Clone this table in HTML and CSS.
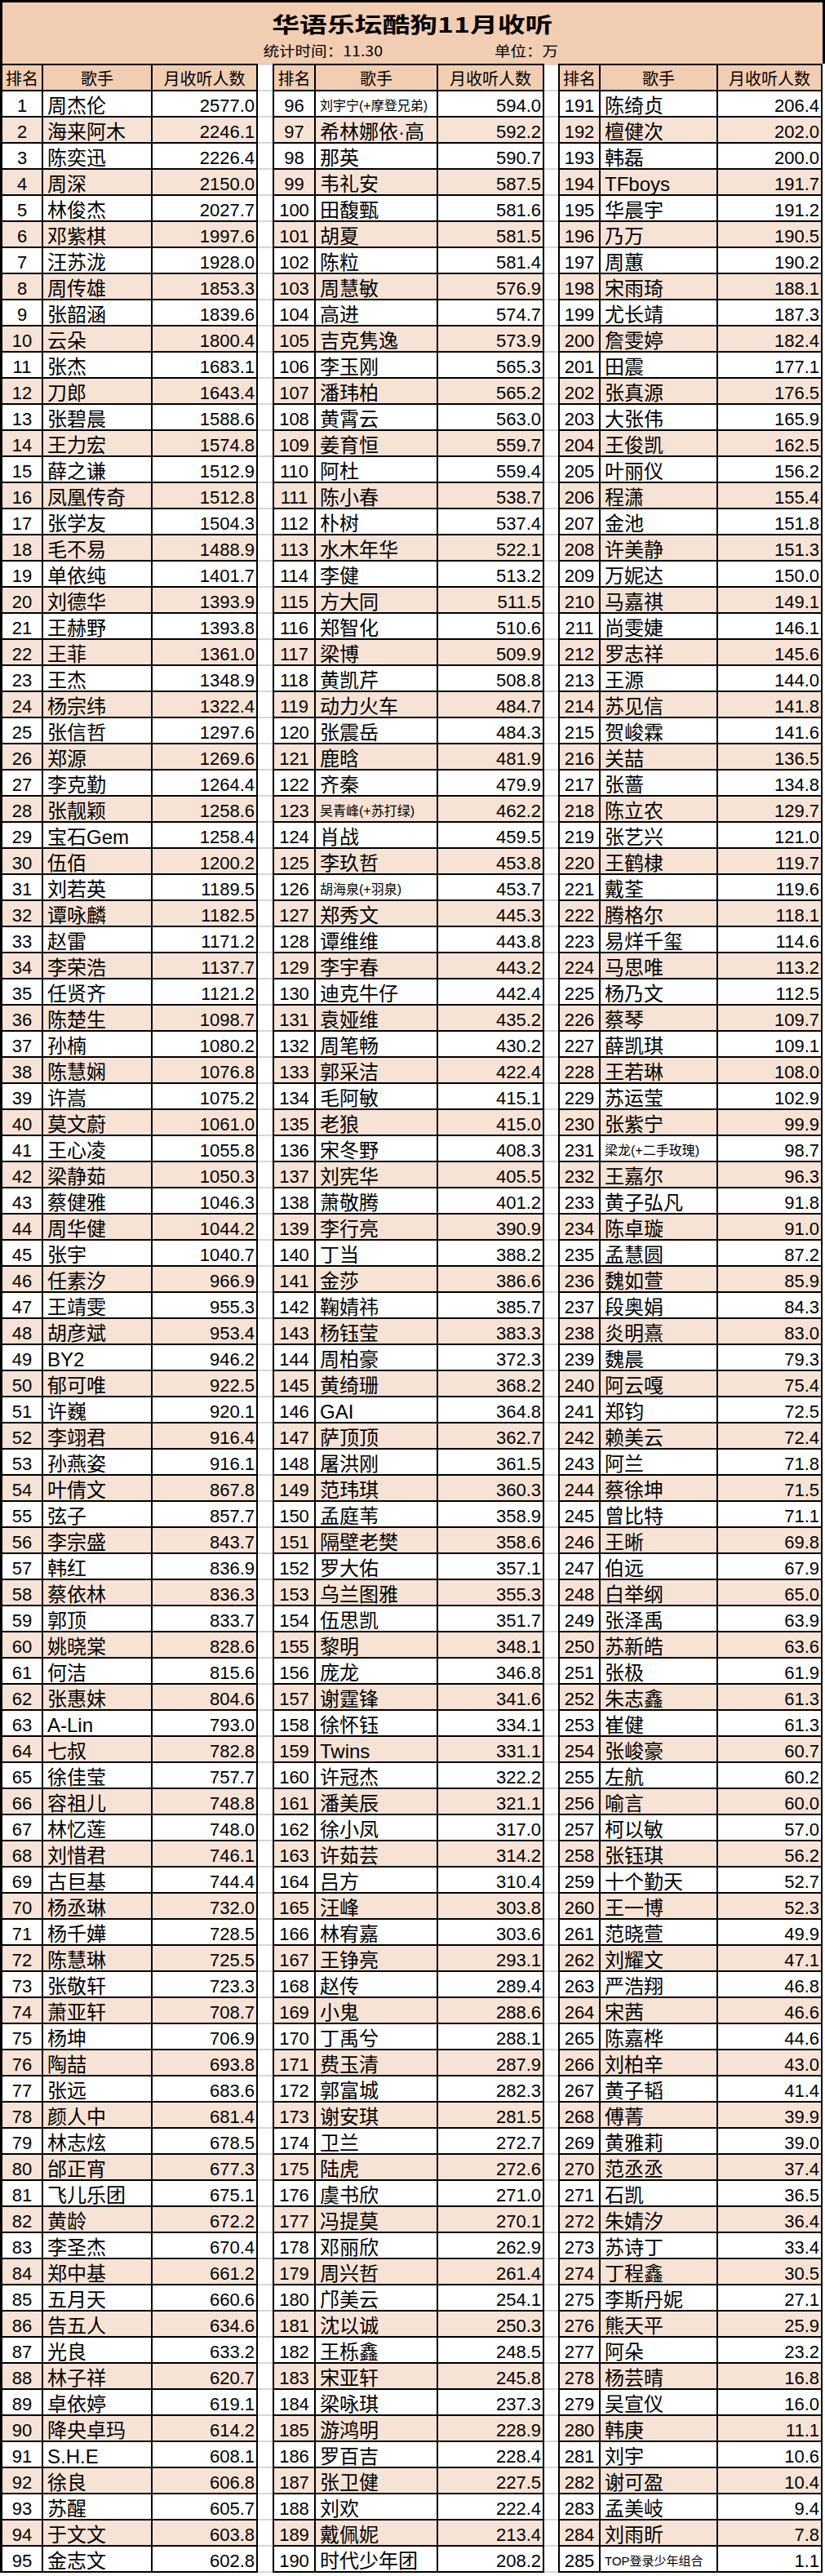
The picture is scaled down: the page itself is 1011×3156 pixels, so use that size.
FILE: index.html
```html
<!DOCTYPE html>
<html lang="zh-CN">
<head>
<meta charset="utf-8">
<title>华语乐坛酷狗11月收听</title>
<link rel="stylesheet" href="styles.css">
</head>
<body>
<header class="title-box">
  <h1 class="title">华语乐坛酷狗11月收听</h1>
  <div class="sub"><span>统计时间：11.30</span><span>单位：万</span></div>
</header>
<main class="board">
<section class="group g1">
<div class="row head"><span>排名</span><span>歌手</span><span>月收听人数</span></div>
<div class="row"><span>1</span><span>周杰伦</span><span>2577.0</span></div>
<div class="row"><span>2</span><span>海来阿木</span><span>2246.1</span></div>
<div class="row"><span>3</span><span>陈奕迅</span><span>2226.4</span></div>
<div class="row"><span>4</span><span>周深</span><span>2150.0</span></div>
<div class="row"><span>5</span><span>林俊杰</span><span>2027.7</span></div>
<div class="row"><span>6</span><span>邓紫棋</span><span>1997.6</span></div>
<div class="row"><span>7</span><span>汪苏泷</span><span>1928.0</span></div>
<div class="row"><span>8</span><span>周传雄</span><span>1853.3</span></div>
<div class="row"><span>9</span><span>张韶涵</span><span>1839.6</span></div>
<div class="row"><span>10</span><span>云朵</span><span>1800.4</span></div>
<div class="row"><span>11</span><span>张杰</span><span>1683.1</span></div>
<div class="row"><span>12</span><span>刀郎</span><span>1643.4</span></div>
<div class="row"><span>13</span><span>张碧晨</span><span>1588.6</span></div>
<div class="row"><span>14</span><span>王力宏</span><span>1574.8</span></div>
<div class="row"><span>15</span><span>薛之谦</span><span>1512.9</span></div>
<div class="row"><span>16</span><span>凤凰传奇</span><span>1512.8</span></div>
<div class="row"><span>17</span><span>张学友</span><span>1504.3</span></div>
<div class="row"><span>18</span><span>毛不易</span><span>1488.9</span></div>
<div class="row"><span>19</span><span>单依纯</span><span>1401.7</span></div>
<div class="row"><span>20</span><span>刘德华</span><span>1393.9</span></div>
<div class="row"><span>21</span><span>王赫野</span><span>1393.8</span></div>
<div class="row"><span>22</span><span>王菲</span><span>1361.0</span></div>
<div class="row"><span>23</span><span>王杰</span><span>1348.9</span></div>
<div class="row"><span>24</span><span>杨宗纬</span><span>1322.4</span></div>
<div class="row"><span>25</span><span>张信哲</span><span>1297.6</span></div>
<div class="row"><span>26</span><span>郑源</span><span>1269.6</span></div>
<div class="row"><span>27</span><span>李克勤</span><span>1264.4</span></div>
<div class="row"><span>28</span><span>张靓颖</span><span>1258.6</span></div>
<div class="row"><span>29</span><span>宝石Gem</span><span>1258.4</span></div>
<div class="row"><span>30</span><span>伍佰</span><span>1200.2</span></div>
<div class="row"><span>31</span><span>刘若英</span><span>1189.5</span></div>
<div class="row"><span>32</span><span>谭咏麟</span><span>1182.5</span></div>
<div class="row"><span>33</span><span>赵雷</span><span>1171.2</span></div>
<div class="row"><span>34</span><span>李荣浩</span><span>1137.7</span></div>
<div class="row"><span>35</span><span>任贤齐</span><span>1121.2</span></div>
<div class="row"><span>36</span><span>陈楚生</span><span>1098.7</span></div>
<div class="row"><span>37</span><span>孙楠</span><span>1080.2</span></div>
<div class="row"><span>38</span><span>陈慧娴</span><span>1076.8</span></div>
<div class="row"><span>39</span><span>许嵩</span><span>1075.2</span></div>
<div class="row"><span>40</span><span>莫文蔚</span><span>1061.0</span></div>
<div class="row"><span>41</span><span>王心凌</span><span>1055.8</span></div>
<div class="row"><span>42</span><span>梁静茹</span><span>1050.3</span></div>
<div class="row"><span>43</span><span>蔡健雅</span><span>1046.3</span></div>
<div class="row"><span>44</span><span>周华健</span><span>1044.2</span></div>
<div class="row"><span>45</span><span>张宇</span><span>1040.7</span></div>
<div class="row"><span>46</span><span>任素汐</span><span>966.9</span></div>
<div class="row"><span>47</span><span>王靖雯</span><span>955.3</span></div>
<div class="row"><span>48</span><span>胡彦斌</span><span>953.4</span></div>
<div class="row"><span>49</span><span>BY2</span><span>946.2</span></div>
<div class="row"><span>50</span><span>郁可唯</span><span>922.5</span></div>
<div class="row"><span>51</span><span>许巍</span><span>920.1</span></div>
<div class="row"><span>52</span><span>李翊君</span><span>916.4</span></div>
<div class="row"><span>53</span><span>孙燕姿</span><span>916.1</span></div>
<div class="row"><span>54</span><span>叶倩文</span><span>867.8</span></div>
<div class="row"><span>55</span><span>弦子</span><span>857.7</span></div>
<div class="row"><span>56</span><span>李宗盛</span><span>843.7</span></div>
<div class="row"><span>57</span><span>韩红</span><span>836.9</span></div>
<div class="row"><span>58</span><span>蔡依林</span><span>836.3</span></div>
<div class="row"><span>59</span><span>郭顶</span><span>833.7</span></div>
<div class="row"><span>60</span><span>姚晓棠</span><span>828.6</span></div>
<div class="row"><span>61</span><span>何洁</span><span>815.6</span></div>
<div class="row"><span>62</span><span>张惠妹</span><span>804.6</span></div>
<div class="row"><span>63</span><span>A-Lin</span><span>793.0</span></div>
<div class="row"><span>64</span><span>七叔</span><span>782.8</span></div>
<div class="row"><span>65</span><span>徐佳莹</span><span>757.7</span></div>
<div class="row"><span>66</span><span>容祖儿</span><span>748.8</span></div>
<div class="row"><span>67</span><span>林忆莲</span><span>748.0</span></div>
<div class="row"><span>68</span><span>刘惜君</span><span>746.1</span></div>
<div class="row"><span>69</span><span>古巨基</span><span>744.4</span></div>
<div class="row"><span>70</span><span>杨丞琳</span><span>732.0</span></div>
<div class="row"><span>71</span><span>杨千嬅</span><span>728.5</span></div>
<div class="row"><span>72</span><span>陈慧琳</span><span>725.5</span></div>
<div class="row"><span>73</span><span>张敬轩</span><span>723.3</span></div>
<div class="row"><span>74</span><span>萧亚轩</span><span>708.7</span></div>
<div class="row"><span>75</span><span>杨坤</span><span>706.9</span></div>
<div class="row"><span>76</span><span>陶喆</span><span>693.8</span></div>
<div class="row"><span>77</span><span>张远</span><span>683.6</span></div>
<div class="row"><span>78</span><span>颜人中</span><span>681.4</span></div>
<div class="row"><span>79</span><span>林志炫</span><span>678.5</span></div>
<div class="row"><span>80</span><span>邰正宵</span><span>677.3</span></div>
<div class="row"><span>81</span><span>飞儿乐团</span><span>675.1</span></div>
<div class="row"><span>82</span><span>黄龄</span><span>672.2</span></div>
<div class="row"><span>83</span><span>李圣杰</span><span>670.4</span></div>
<div class="row"><span>84</span><span>郑中基</span><span>661.2</span></div>
<div class="row"><span>85</span><span>五月天</span><span>660.6</span></div>
<div class="row"><span>86</span><span>告五人</span><span>634.6</span></div>
<div class="row"><span>87</span><span>光良</span><span>633.2</span></div>
<div class="row"><span>88</span><span>林子祥</span><span>620.7</span></div>
<div class="row"><span>89</span><span>卓依婷</span><span>619.1</span></div>
<div class="row"><span>90</span><span>降央卓玛</span><span>614.2</span></div>
<div class="row"><span>91</span><span>S.H.E</span><span>608.1</span></div>
<div class="row"><span>92</span><span>徐良</span><span>606.8</span></div>
<div class="row"><span>93</span><span>苏醒</span><span>605.7</span></div>
<div class="row"><span>94</span><span>于文文</span><span>603.8</span></div>
<div class="row"><span>95</span><span>金志文</span><span>602.8</span></div>
</section>
<div class="spacer s1"></div>
<section class="group g2">
<div class="row head"><span>排名</span><span>歌手</span><span>月收听人数</span></div>
<div class="row"><span>96</span><span class="sm">刘宇宁(+摩登兄弟)</span><span>594.0</span></div>
<div class="row"><span>97</span><span>希林娜依·高</span><span>592.2</span></div>
<div class="row"><span>98</span><span>那英</span><span>590.7</span></div>
<div class="row"><span>99</span><span>韦礼安</span><span>587.5</span></div>
<div class="row"><span>100</span><span>田馥甄</span><span>581.6</span></div>
<div class="row"><span>101</span><span>胡夏</span><span>581.5</span></div>
<div class="row"><span>102</span><span>陈粒</span><span>581.4</span></div>
<div class="row"><span>103</span><span>周慧敏</span><span>576.9</span></div>
<div class="row"><span>104</span><span>高进</span><span>574.7</span></div>
<div class="row"><span>105</span><span>吉克隽逸</span><span>573.9</span></div>
<div class="row"><span>106</span><span>李玉刚</span><span>565.3</span></div>
<div class="row"><span>107</span><span>潘玮柏</span><span>565.2</span></div>
<div class="row"><span>108</span><span>黄霄云</span><span>563.0</span></div>
<div class="row"><span>109</span><span>姜育恒</span><span>559.7</span></div>
<div class="row"><span>110</span><span>阿杜</span><span>559.4</span></div>
<div class="row"><span>111</span><span>陈小春</span><span>538.7</span></div>
<div class="row"><span>112</span><span>朴树</span><span>537.4</span></div>
<div class="row"><span>113</span><span>水木年华</span><span>522.1</span></div>
<div class="row"><span>114</span><span>李健</span><span>513.2</span></div>
<div class="row"><span>115</span><span>方大同</span><span>511.5</span></div>
<div class="row"><span>116</span><span>郑智化</span><span>510.6</span></div>
<div class="row"><span>117</span><span>梁博</span><span>509.9</span></div>
<div class="row"><span>118</span><span>黄凯芹</span><span>508.8</span></div>
<div class="row"><span>119</span><span>动力火车</span><span>484.7</span></div>
<div class="row"><span>120</span><span>张震岳</span><span>484.3</span></div>
<div class="row"><span>121</span><span>鹿晗</span><span>481.9</span></div>
<div class="row"><span>122</span><span>齐秦</span><span>479.9</span></div>
<div class="row"><span>123</span><span class="sm">吴青峰(+苏打绿)</span><span>462.2</span></div>
<div class="row"><span>124</span><span>肖战</span><span>459.5</span></div>
<div class="row"><span>125</span><span>李玖哲</span><span>453.8</span></div>
<div class="row"><span>126</span><span class="sm">胡海泉(+羽泉)</span><span>453.7</span></div>
<div class="row"><span>127</span><span>郑秀文</span><span>445.3</span></div>
<div class="row"><span>128</span><span>谭维维</span><span>443.8</span></div>
<div class="row"><span>129</span><span>李宇春</span><span>443.2</span></div>
<div class="row"><span>130</span><span>迪克牛仔</span><span>442.4</span></div>
<div class="row"><span>131</span><span>袁娅维</span><span>435.2</span></div>
<div class="row"><span>132</span><span>周笔畅</span><span>430.2</span></div>
<div class="row"><span>133</span><span>郭采洁</span><span>422.4</span></div>
<div class="row"><span>134</span><span>毛阿敏</span><span>415.1</span></div>
<div class="row"><span>135</span><span>老狼</span><span>415.0</span></div>
<div class="row"><span>136</span><span>宋冬野</span><span>408.3</span></div>
<div class="row"><span>137</span><span>刘宪华</span><span>405.5</span></div>
<div class="row"><span>138</span><span>萧敬腾</span><span>401.2</span></div>
<div class="row"><span>139</span><span>李行亮</span><span>390.9</span></div>
<div class="row"><span>140</span><span>丁当</span><span>388.2</span></div>
<div class="row"><span>141</span><span>金莎</span><span>386.6</span></div>
<div class="row"><span>142</span><span>鞠婧祎</span><span>385.7</span></div>
<div class="row"><span>143</span><span>杨钰莹</span><span>383.3</span></div>
<div class="row"><span>144</span><span>周柏豪</span><span>372.3</span></div>
<div class="row"><span>145</span><span>黄绮珊</span><span>368.2</span></div>
<div class="row"><span>146</span><span>GAI</span><span>364.8</span></div>
<div class="row"><span>147</span><span>萨顶顶</span><span>362.7</span></div>
<div class="row"><span>148</span><span>屠洪刚</span><span>361.5</span></div>
<div class="row"><span>149</span><span>范玮琪</span><span>360.3</span></div>
<div class="row"><span>150</span><span>孟庭苇</span><span>358.9</span></div>
<div class="row"><span>151</span><span>隔壁老樊</span><span>358.6</span></div>
<div class="row"><span>152</span><span>罗大佑</span><span>357.1</span></div>
<div class="row"><span>153</span><span>乌兰图雅</span><span>355.3</span></div>
<div class="row"><span>154</span><span>伍思凯</span><span>351.7</span></div>
<div class="row"><span>155</span><span>黎明</span><span>348.1</span></div>
<div class="row"><span>156</span><span>庞龙</span><span>346.8</span></div>
<div class="row"><span>157</span><span>谢霆锋</span><span>341.6</span></div>
<div class="row"><span>158</span><span>徐怀钰</span><span>334.1</span></div>
<div class="row"><span>159</span><span>Twins</span><span>331.1</span></div>
<div class="row"><span>160</span><span>许冠杰</span><span>322.2</span></div>
<div class="row"><span>161</span><span>潘美辰</span><span>321.1</span></div>
<div class="row"><span>162</span><span>徐小凤</span><span>317.0</span></div>
<div class="row"><span>163</span><span>许茹芸</span><span>314.2</span></div>
<div class="row"><span>164</span><span>吕方</span><span>310.4</span></div>
<div class="row"><span>165</span><span>汪峰</span><span>303.8</span></div>
<div class="row"><span>166</span><span>林宥嘉</span><span>303.6</span></div>
<div class="row"><span>167</span><span>王铮亮</span><span>293.1</span></div>
<div class="row"><span>168</span><span>赵传</span><span>289.4</span></div>
<div class="row"><span>169</span><span>小鬼</span><span>288.6</span></div>
<div class="row"><span>170</span><span>丁禹兮</span><span>288.1</span></div>
<div class="row"><span>171</span><span>费玉清</span><span>287.9</span></div>
<div class="row"><span>172</span><span>郭富城</span><span>282.3</span></div>
<div class="row"><span>173</span><span>谢安琪</span><span>281.5</span></div>
<div class="row"><span>174</span><span>卫兰</span><span>272.7</span></div>
<div class="row"><span>175</span><span>陆虎</span><span>272.6</span></div>
<div class="row"><span>176</span><span>虞书欣</span><span>271.0</span></div>
<div class="row"><span>177</span><span>冯提莫</span><span>270.1</span></div>
<div class="row"><span>178</span><span>邓丽欣</span><span>262.9</span></div>
<div class="row"><span>179</span><span>周兴哲</span><span>261.4</span></div>
<div class="row"><span>180</span><span>邝美云</span><span>254.1</span></div>
<div class="row"><span>181</span><span>沈以诚</span><span>250.3</span></div>
<div class="row"><span>182</span><span>王栎鑫</span><span>248.5</span></div>
<div class="row"><span>183</span><span>宋亚轩</span><span>245.8</span></div>
<div class="row"><span>184</span><span>梁咏琪</span><span>237.3</span></div>
<div class="row"><span>185</span><span>游鸿明</span><span>228.9</span></div>
<div class="row"><span>186</span><span>罗百吉</span><span>228.4</span></div>
<div class="row"><span>187</span><span>张卫健</span><span>227.5</span></div>
<div class="row"><span>188</span><span>刘欢</span><span>222.4</span></div>
<div class="row"><span>189</span><span>戴佩妮</span><span>213.4</span></div>
<div class="row"><span>190</span><span>时代少年团</span><span>208.2</span></div>
</section>
<div class="spacer s2"></div>
<section class="group g3">
<div class="row head"><span>排名</span><span>歌手</span><span>月收听人数</span></div>
<div class="row"><span>191</span><span>陈绮贞</span><span>206.4</span></div>
<div class="row"><span>192</span><span>檀健次</span><span>202.0</span></div>
<div class="row"><span>193</span><span>韩磊</span><span>200.0</span></div>
<div class="row"><span>194</span><span>TFboys</span><span>191.7</span></div>
<div class="row"><span>195</span><span>华晨宇</span><span>191.2</span></div>
<div class="row"><span>196</span><span>乃万</span><span>190.5</span></div>
<div class="row"><span>197</span><span>周蕙</span><span>190.2</span></div>
<div class="row"><span>198</span><span>宋雨琦</span><span>188.1</span></div>
<div class="row"><span>199</span><span>尤长靖</span><span>187.3</span></div>
<div class="row"><span>200</span><span>詹雯婷</span><span>182.4</span></div>
<div class="row"><span>201</span><span>田震</span><span>177.1</span></div>
<div class="row"><span>202</span><span>张真源</span><span>176.5</span></div>
<div class="row"><span>203</span><span>大张伟</span><span>165.9</span></div>
<div class="row"><span>204</span><span>王俊凯</span><span>162.5</span></div>
<div class="row"><span>205</span><span>叶丽仪</span><span>156.2</span></div>
<div class="row"><span>206</span><span>程潇</span><span>155.4</span></div>
<div class="row"><span>207</span><span>金池</span><span>151.8</span></div>
<div class="row"><span>208</span><span>许美静</span><span>151.3</span></div>
<div class="row"><span>209</span><span>万妮达</span><span>150.0</span></div>
<div class="row"><span>210</span><span>马嘉祺</span><span>149.1</span></div>
<div class="row"><span>211</span><span>尚雯婕</span><span>146.1</span></div>
<div class="row"><span>212</span><span>罗志祥</span><span>145.6</span></div>
<div class="row"><span>213</span><span>王源</span><span>144.0</span></div>
<div class="row"><span>214</span><span>苏见信</span><span>141.8</span></div>
<div class="row"><span>215</span><span>贺峻霖</span><span>141.6</span></div>
<div class="row"><span>216</span><span>关喆</span><span>136.5</span></div>
<div class="row"><span>217</span><span>张蔷</span><span>134.8</span></div>
<div class="row"><span>218</span><span>陈立农</span><span>129.7</span></div>
<div class="row"><span>219</span><span>张艺兴</span><span>121.0</span></div>
<div class="row"><span>220</span><span>王鹤棣</span><span>119.7</span></div>
<div class="row"><span>221</span><span>戴荃</span><span>119.6</span></div>
<div class="row"><span>222</span><span>腾格尔</span><span>118.1</span></div>
<div class="row"><span>223</span><span>易烊千玺</span><span>114.6</span></div>
<div class="row"><span>224</span><span>马思唯</span><span>113.2</span></div>
<div class="row"><span>225</span><span>杨乃文</span><span>112.5</span></div>
<div class="row"><span>226</span><span>蔡琴</span><span>109.7</span></div>
<div class="row"><span>227</span><span>薛凯琪</span><span>109.1</span></div>
<div class="row"><span>228</span><span>王若琳</span><span>108.0</span></div>
<div class="row"><span>229</span><span>苏运莹</span><span>102.9</span></div>
<div class="row"><span>230</span><span>张紫宁</span><span>99.9</span></div>
<div class="row"><span>231</span><span class="sm">梁龙(+二手玫瑰)</span><span>98.7</span></div>
<div class="row"><span>232</span><span>王嘉尔</span><span>96.3</span></div>
<div class="row"><span>233</span><span>黄子弘凡</span><span>91.8</span></div>
<div class="row"><span>234</span><span>陈卓璇</span><span>91.0</span></div>
<div class="row"><span>235</span><span>孟慧圆</span><span>87.2</span></div>
<div class="row"><span>236</span><span>魏如萱</span><span>85.9</span></div>
<div class="row"><span>237</span><span>段奥娟</span><span>84.3</span></div>
<div class="row"><span>238</span><span>炎明熹</span><span>83.0</span></div>
<div class="row"><span>239</span><span>魏晨</span><span>79.3</span></div>
<div class="row"><span>240</span><span>阿云嘎</span><span>75.4</span></div>
<div class="row"><span>241</span><span>郑钧</span><span>72.5</span></div>
<div class="row"><span>242</span><span>赖美云</span><span>72.4</span></div>
<div class="row"><span>243</span><span>阿兰</span><span>71.8</span></div>
<div class="row"><span>244</span><span>蔡徐坤</span><span>71.5</span></div>
<div class="row"><span>245</span><span>曾比特</span><span>71.1</span></div>
<div class="row"><span>246</span><span>王晰</span><span>69.8</span></div>
<div class="row"><span>247</span><span>伯远</span><span>67.9</span></div>
<div class="row"><span>248</span><span>白举纲</span><span>65.0</span></div>
<div class="row"><span>249</span><span>张泽禹</span><span>63.9</span></div>
<div class="row"><span>250</span><span>苏新皓</span><span>63.6</span></div>
<div class="row"><span>251</span><span>张极</span><span>61.9</span></div>
<div class="row"><span>252</span><span>朱志鑫</span><span>61.3</span></div>
<div class="row"><span>253</span><span>崔健</span><span>61.3</span></div>
<div class="row"><span>254</span><span>张峻豪</span><span>60.7</span></div>
<div class="row"><span>255</span><span>左航</span><span>60.2</span></div>
<div class="row"><span>256</span><span>喻言</span><span>60.0</span></div>
<div class="row"><span>257</span><span>柯以敏</span><span>57.0</span></div>
<div class="row"><span>258</span><span>张钰琪</span><span>56.2</span></div>
<div class="row"><span>259</span><span>十个勤天</span><span>52.7</span></div>
<div class="row"><span>260</span><span>王一博</span><span>52.3</span></div>
<div class="row"><span>261</span><span>范晓萱</span><span>49.9</span></div>
<div class="row"><span>262</span><span>刘耀文</span><span>47.1</span></div>
<div class="row"><span>263</span><span>严浩翔</span><span>46.8</span></div>
<div class="row"><span>264</span><span>宋茜</span><span>46.6</span></div>
<div class="row"><span>265</span><span>陈嘉桦</span><span>44.6</span></div>
<div class="row"><span>266</span><span>刘柏辛</span><span>43.0</span></div>
<div class="row"><span>267</span><span>黄子韬</span><span>41.4</span></div>
<div class="row"><span>268</span><span>傅菁</span><span>39.9</span></div>
<div class="row"><span>269</span><span>黄雅莉</span><span>39.0</span></div>
<div class="row"><span>270</span><span>范丞丞</span><span>37.4</span></div>
<div class="row"><span>271</span><span>石凯</span><span>36.5</span></div>
<div class="row"><span>272</span><span>朱婧汐</span><span>36.4</span></div>
<div class="row"><span>273</span><span>苏诗丁</span><span>33.4</span></div>
<div class="row"><span>274</span><span>丁程鑫</span><span>30.5</span></div>
<div class="row"><span>275</span><span>李斯丹妮</span><span>27.1</span></div>
<div class="row"><span>276</span><span>熊天平</span><span>25.9</span></div>
<div class="row"><span>277</span><span>阿朵</span><span>23.2</span></div>
<div class="row"><span>278</span><span>杨芸晴</span><span>16.8</span></div>
<div class="row"><span>279</span><span>吴宣仪</span><span>16.0</span></div>
<div class="row"><span>280</span><span>韩庚</span><span>11.1</span></div>
<div class="row"><span>281</span><span>刘宇</span><span>10.6</span></div>
<div class="row"><span>282</span><span>谢可盈</span><span>10.4</span></div>
<div class="row"><span>283</span><span>孟美岐</span><span>9.4</span></div>
<div class="row"><span>284</span><span>刘雨昕</span><span>7.8</span></div>
<div class="row"><span>285</span><span class="xs">TOP登录少年组合</span><span>1.1</span></div>
</section>
</main>
</body>
</html>
```
FILE: styles.css
```css
* {
  box-sizing: border-box;
  margin: 0;
  padding: 0;
}

body {
  width: 1011px;
  background: #fff;
  color: #000;
  font-family: "Liberation Sans", "Noto Sans CJK SC", sans-serif;
}

/* ---------- title block ---------- */
.title-box {
  display: flex;
  flex-direction: column;
  align-items: center;
  height: 78px;
  border: 3px solid #000;
  border-bottom: 0;
  background: #f1cdb2;
  overflow: hidden;
}

.title {
  margin-top: 8px;
  font-family: "Noto Sans CJK SC", sans-serif;
  font-weight: 700;
  font-size: 26px;
  line-height: 36px;
  transform: scaleX(1.3);
}

.sub {
  display: flex;
  justify-content: center;
  gap: 152px;
  margin-top: 5px;
  font-family: "Noto Sans CJK SC", sans-serif;
  font-size: 17px;
  line-height: 20px;
}

.sub span {
  transform: scaleX(1.15);
}

/* ---------- board with three groups ---------- */
.board {
  display: flex;
  align-items: stretch;
}

.group {
  display: grid;
  grid-auto-rows: 30px;
  gap: 2px;
  padding: 2px;
  background: #000;
}

.g1 {
  grid-template-columns: 48px 132px 127px;
  padding-left: 3px;
}

.g2 {
  grid-template-columns: 49px 148px 128px;
}

.g3 {
  grid-template-columns: 48px 142px 126px;
}

.spacer {
  background: linear-gradient(#d6d6d6 0 2px, transparent 2px) 0 0 / 100% 32px;
}

.s1 { width: 18px; }
.s2 { width: 17px; }

.row {
  display: contents;
}

.row > span {
  height: 30px;
  background: #fff;
  padding-top: 5px;
  line-height: 25px;
  white-space: nowrap;
}

.row:nth-child(odd) > span {
  background: #f7e3d6;
}

.row > span:nth-child(1) {
  text-align: center;
  font-size: 22px;
}

.row > span:nth-child(2) {
  padding-left: 5px;
  font-size: 24px;
}

.row > span:nth-child(3) {
  text-align: right;
  padding-right: 2px;
  font-size: 22px;
}

.row > span.sm {
  font-size: 16px;
}

.row > span.xs {
  font-size: 15px;
}

.row.head > span {
  background: #f1cdb2;
  padding: 2px 0 0;
  text-align: center;
  font-family: "Noto Sans CJK SC", sans-serif;
  font-size: 20px;
  line-height: 28px;
}
```
